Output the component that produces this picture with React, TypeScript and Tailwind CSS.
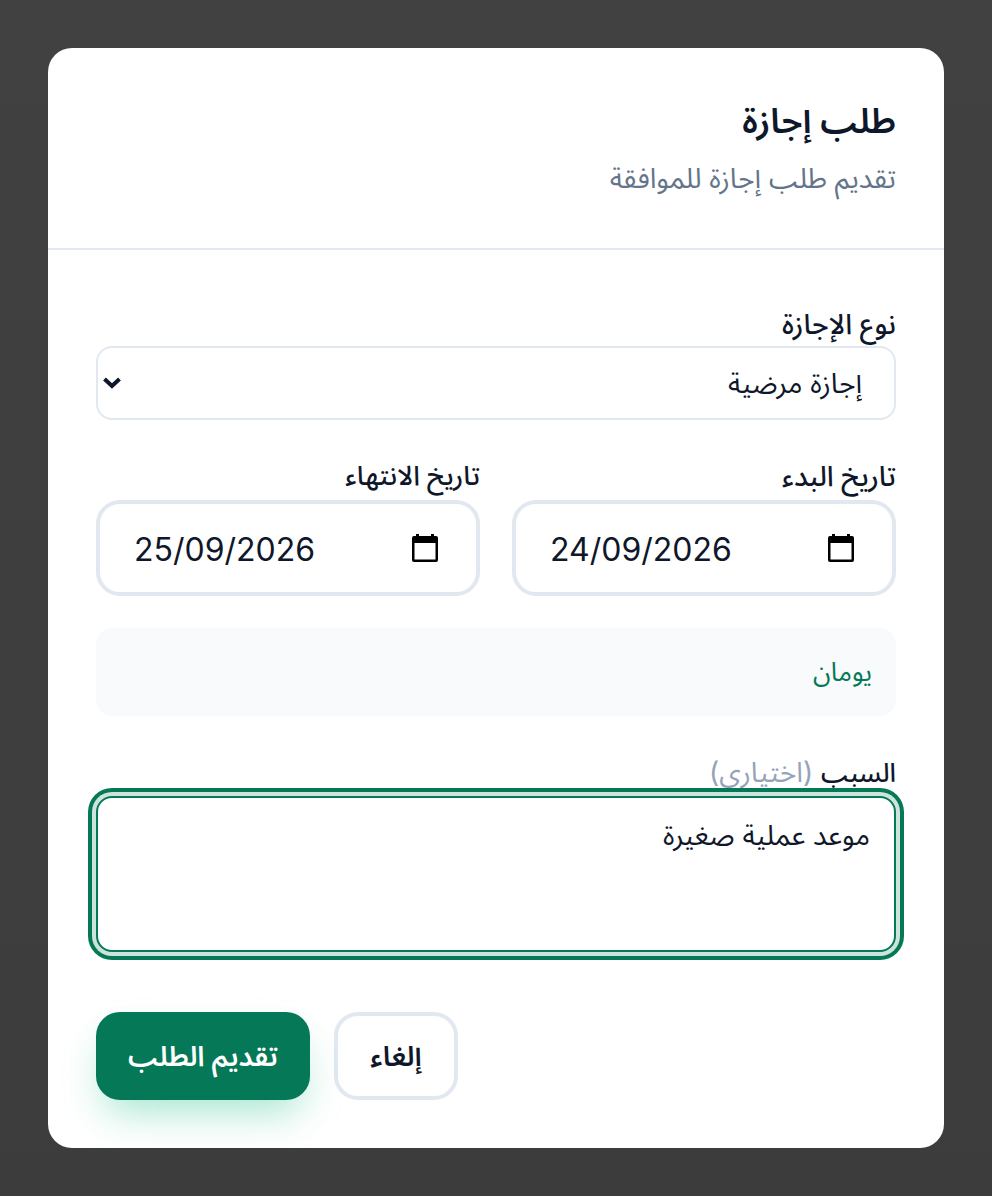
const font = { fontFamily: 'Inter, "Noto Sans Arabic", "Noto Sans", "DejaVu Sans", sans-serif' };

function CalendarIcon() {
  return (
    <svg width="26" height="28" viewBox="0 0 26 28" className="shrink-0">
      <path
        fillRule="evenodd"
        d="M4 0h3v2h12V0h3v2h2a2 2 0 0 1 2 2v22a2 2 0 0 1-2 2H2a2 2 0 0 1-2-2V4a2 2 0 0 1 2-2h2V0zM2.500 9v16.500h21V9h-21z"
        fill="#000"
      />
    </svg>
  );
}

function DateField({ label, value, small }: { label: string; value: string; small?: boolean }) {
  return (
    <div className="flex-1 min-w-0">
      <label className={small ? 'block text-[27px] leading-[32px] font-medium text-[#0f172a] mb-2' : 'block text-[28px] leading-[32px] font-medium text-[#0f172a] mb-2'}>{label}</label>
      <div dir="ltr" className="h-24 rounded-3xl border-4 border-[#e2e8f0] bg-white pl-[34px] pr-[38px] flex items-center justify-between">
        <span className="text-[32px] text-[#0f172a] pt-1">{value}</span>
        <CalendarIcon />
      </div>
    </div>
  );
}

export default function App() {
  return (
    <div dir="rtl" style={font} className="h-[1196px] bg-gradient-to-b from-[#414141] to-[#3b3c3b] p-12 overflow-hidden">
      <div className="bg-white rounded-3xl h-[1100px] overflow-hidden">
        <div className="h-[202px] px-12 pt-12 border-b-2 border-[#e2e8f0]">
          <h2 className="text-[35px] leading-[48px] font-semibold text-[#0f172a]">طلب إجازة</h2>
          <p className="text-[28px] leading-[40px] mt-3.5 text-[#64748b]">تقديم طلب إجازة للموافقة</p>
        </div>

        <div className="px-12 pt-[56px]">
          <label className="block text-[28px] leading-[36px] font-medium text-[#0f172a] mb-1">نوع الإجازة</label>
          <div className="relative">
            <select
              defaultValue="sick"
              className="block w-full h-[74px] appearance-none rounded-2xl border-2 border-[#e2e8f0] bg-white pr-8 pl-10 text-[28px] text-[#0f172a]"
            >
              <option value="sick">إجازة مرضية</option>
              <option value="annual">إجازة سنوية</option>
            </select>
            <svg width="20" height="14" viewBox="0 0 20 14" className="absolute left-[6px] top-[30px] pointer-events-none">
              <path d="M2.500 3 10 10l7.500-7" fill="none" stroke="#0f172a" strokeWidth="4" />
            </svg>
          </div>

          <div className="flex gap-8 mt-10">
            <DateField label="تاريخ البدء" value="24/09/2026" />
            <DateField label="تاريخ الانتهاء" value="25/09/2026" small />
          </div>

          <div className="mt-8 h-[88px] rounded-2xl bg-[#f8fafc] px-6 pb-0.5 flex items-center text-[26px] text-[#047857]">يومان</div>

          <div className="mt-10">
            <label className="block text-[28px] leading-[32px] text-[#0f172a] mb-[7px]">
              <span className="text-[26px] font-medium">السبب</span> <span className="text-[#94a3b8]">(اختياري)</span>
            </label>
            <textarea
              readOnly
              value="موعد عملية صغيرة"
              className="relative block w-full h-[156px] rounded-2xl border-2 border-[#047857] bg-white px-6 py-4 text-[28px] text-[#0f172a] resize-none outline-none shadow-[0_0_0_4px_#cde4dc,0_0_0_8px_#047857]"
            />
          </div>

          <div className="flex justify-end gap-6 mt-[60px]">
            <button className="h-[88px] w-[124px] rounded-3xl border-4 border-[#e2e8f0] bg-white text-[28px] font-semibold text-[#0f172a]">إلغاء</button>
            <button className="h-[88px] w-[214px] rounded-3xl bg-[#047857] text-[28px] font-semibold text-white shadow-[0_20px_40px_-10px_rgba(16,185,129,0.4)]">تقديم الطلب</button>
          </div>
        </div>
      </div>
    </div>
  );
}
